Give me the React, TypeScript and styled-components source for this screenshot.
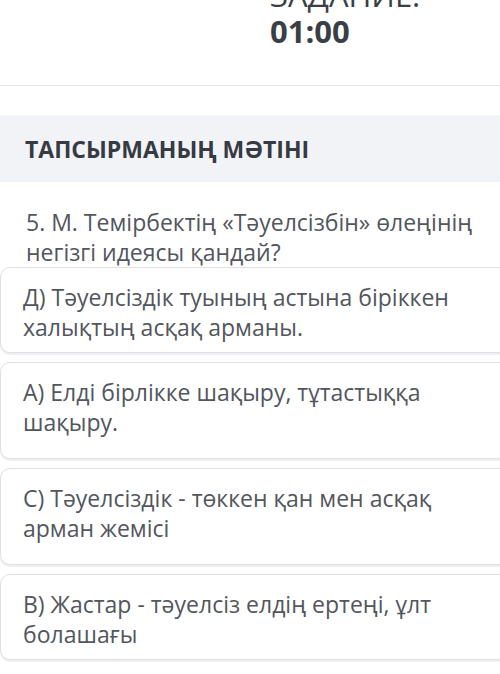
import React from "react";
import styled, { createGlobalStyle } from "styled-components";

const GlobalStyle = createGlobalStyle`
  html, body {
    margin: 0;
    padding: 0;
    background: #ffffff;
  }
  body {
    font-family: "Open Sans", "Noto Sans", sans-serif;
    -webkit-font-smoothing: antialiased;
  }
`;

const Page = styled.div`
  width: 500px;
  height: 674px;
  overflow: hidden;
  background: #ffffff;
`;

const Header = styled.div`
  display: grid;
  grid-template-columns: 270px 1fr;
  margin-top: -23px;
  padding-bottom: 37px;
  border-bottom: 1.5px solid #e4e5e8;
`;

const HeaderCol = styled.div`
  display: flex;
  flex-direction: column;
`;

const TimerLabel = styled.div`
  font-size: 31px;
  line-height: 37px;
  color: #3a3f47;
  font-weight: 400;
  text-transform: uppercase;
`;

const TimerValue = styled.div`
  font-size: 31px;
  line-height: 34px;
  color: #3a3f47;
  font-weight: 700;
`;

const Section = styled.div`
  margin-top: 29px;
  background: #f2f3f7;
  padding: 22px 25px 21px;
`;

const SectionTitle = styled.h2`
  margin: 0;
  font-size: 23px;
  line-height: 24px;
  font-weight: 700;
  color: #353a43;
  text-transform: uppercase;
`;

const Question = styled.p`
  margin: 0;
  padding: 25px 20px 0 26px;
  font-size: 23px;
  line-height: 30px;
  color: #52565d;
`;

const Answers = styled.div`
  display: flex;
  flex-direction: column;
  gap: 9px;
  margin-right: -20px;
`;

const Answer = styled.div<{ tall?: boolean }>`
  box-sizing: border-box;
  min-height: ${(p) => (p.tall ? "97px" : "86px")};
  padding: 14px 48px 9px 22px;
  border: 1.5px solid #dfe0e3;
  border-radius: 10px;
  background: #ffffff;
  box-shadow: 0 2px 0 #eeeff1;
  font-size: 23px;
  line-height: 30px;
  color: #52565d;
`;

const answers = [
  { text: "Д) Тәуелсіздік туының астына біріккен халықтың асқақ арманы.", tall: false },
  { text: "А) Елді бірлікке шақыру, тұтастыққа шақыру.", tall: true },
  { text: "С) Тәуелсіздік - төккен қан мен асқақ арман жемісі", tall: true },
  { text: "В) Жастар - тәуелсіз елдің ертеңі, ұлт болашағы", tall: false },
];

export default function App() {
  return (
    <Page>
      <GlobalStyle />
      <Header>
        <HeaderCol />
        <HeaderCol>
          <TimerLabel>Задание:</TimerLabel>
          <TimerValue>01:00</TimerValue>
        </HeaderCol>
      </Header>
      <Section>
        <SectionTitle>Тапсырманың мәтіні</SectionTitle>
      </Section>
      <Question>
        5. М. Темірбектің «Тәуелсізбін» өлеңінің негізгі идеясы қандай?
      </Question>
      <Answers>
        {answers.map((a) => (
          <Answer key={a.text} tall={a.tall}>
            {a.text}
          </Answer>
        ))}
      </Answers>
    </Page>
  );
}
